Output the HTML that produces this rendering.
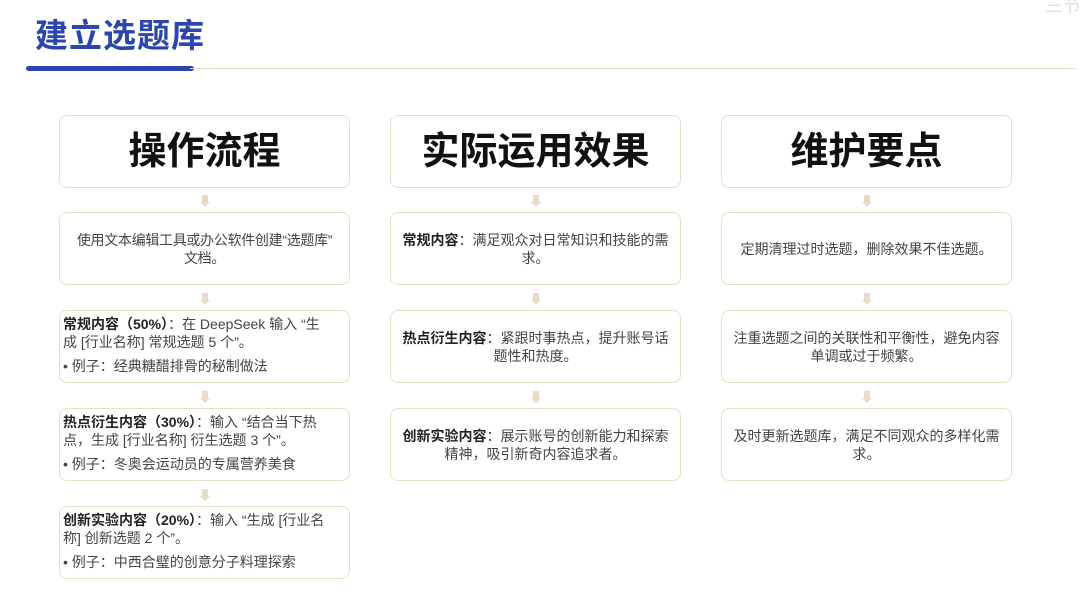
<!DOCTYPE html>
<html><head><meta charset="utf-8"><style>
*{margin:0;padding:0;box-sizing:border-box}
body{width:1080px;height:599px;background:#fff;position:relative;overflow:hidden;font-family:"Liberation Sans","Noto Sans CJK SC",sans-serif;color:#444}
.h1{position:absolute;left:35px;top:9px;font-size:33px;font-weight:bold;color:#2b46ad;letter-spacing:1px}
.bl{position:absolute;left:26px;top:66px;width:168px;height:5px;background:#2b46ad;border-radius:3px}
.tl{position:absolute;left:190px;top:68px;width:886px;height:1px;background:#e4dfc6}
.box{position:absolute;width:291px;border:1.5px solid #e9dfc8;border-radius:8px;background:#fff;display:flex;align-items:center;justify-content:center;text-align:center;font-size:14px;line-height:18px;padding:0 5px}
.t{height:73px;font-size:38px;font-weight:bold;color:#111}
.s{height:73px}
.l{justify-content:flex-start;text-align:left;display:block;padding:4px 2px 0 3px;white-space:nowrap}
.l p{margin:0}
.l .e{margin-top:6px}
b{color:#222}
.ar{position:absolute;width:8px;height:12px}
.ar:before{content:"";position:absolute;left:1px;top:0;width:6px;height:7px;background:#e7dcc8}
.ar:after{content:"";position:absolute;left:-1px;top:7px;border-left:5px solid transparent;border-right:5px solid transparent;border-top:5px solid #e7dcc8}
</style></head><body>
<div class="h1">建立选题库</div>
<div class="bl"></div><div class="tl"></div>
<div style="position:absolute;left:1045px;top:-8px;font-size:18px;color:#ddd;white-space:nowrap">三节</div>

<div class="box t" style="left:59px;top:115px">操作流程</div>
<div class="box t" style="left:390px;top:115px">实际运用效果</div>
<div class="box t" style="left:721px;top:115px">维护要点</div>

<div class="ar" style="left:201px;top:195px"></div>
<div class="ar" style="left:201px;top:293px"></div>
<div class="ar" style="left:201px;top:391px"></div>
<div class="ar" style="left:201px;top:489px"></div>
<div class="ar" style="left:532px;top:195px"></div>
<div class="ar" style="left:532px;top:293px"></div>
<div class="ar" style="left:532px;top:391px"></div>
<div class="ar" style="left:863px;top:195px"></div>
<div class="ar" style="left:863px;top:293px"></div>
<div class="ar" style="left:863px;top:391px"></div>

<div class="box s" style="left:59px;top:212px;padding:0 1px;letter-spacing:-0.3px">使用文本编辑工具或办公软件创建“选题库”<br>文档。</div>
<div class="box s l" style="left:59px;top:310px"><p><b>常规内容（50%）</b>：在 DeepSeek 输入 “生<br>成 [行业名称] 常规选题 5 个”。</p><p class="e">• 例子：经典糖醋排骨的秘制做法</p></div>
<div class="box s l" style="left:59px;top:408px"><p><b>热点衍生内容（30%）</b>：输入 “结合当下热<br>点，生成 [行业名称] 衍生选题 3 个”。</p><p class="e">• 例子：冬奥会运动员的专属营养美食</p></div>
<div class="box s l" style="left:59px;top:506px"><p><b>创新实验内容（20%）</b>：输入 “生成 [行业名<br>称] 创新选题 2 个”。</p><p class="e">• 例子：中西合璧的创意分子料理探索</p></div>

<div class="box s" style="left:390px;top:212px;padding:0 8px"><div><b>常规内容</b>：满足观众对日常知识和技能的需求。</div></div>
<div class="box s" style="left:390px;top:310px;padding:0 8px"><div><b>热点衍生内容</b>：紧跟时事热点，提升账号话题性和热度。</div></div>
<div class="box s" style="left:390px;top:408px;padding:0 8px"><div><b>创新实验内容</b>：展示账号的创新能力和探索精神，吸引新奇内容追求者。</div></div>

<div class="box s" style="left:721px;top:212px">定期清理过时选题，删除效果不佳选题。</div>
<div class="box s" style="left:721px;top:310px">注重选题之间的关联性和平衡性，避免内容单调或过于频繁。</div>
<div class="box s" style="left:721px;top:408px">及时更新选题库，满足不同观众的多样化需求。</div>
</body></html>
